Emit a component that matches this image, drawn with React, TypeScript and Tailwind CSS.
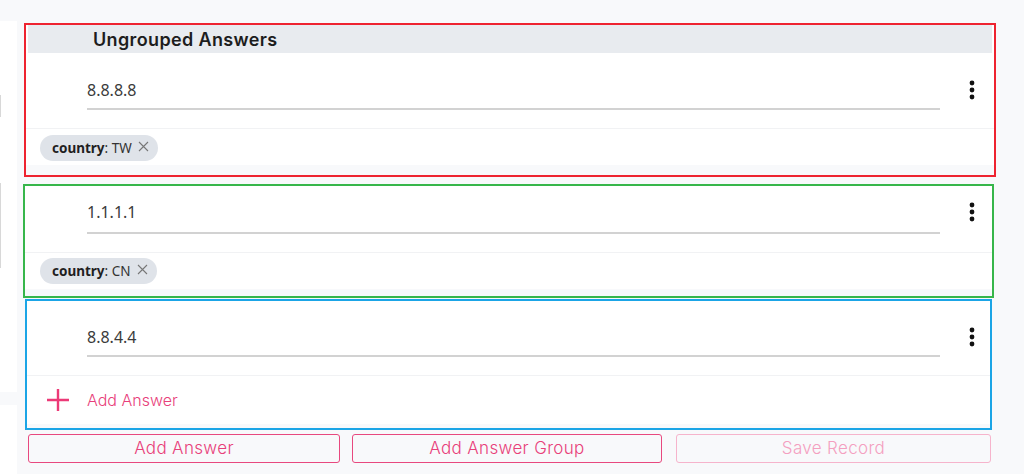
import React from "react";

const sans = { fontFamily: '"Noto Sans", "Open Sans", sans-serif' };
const geo = { fontFamily: 'Inter, "Noto Sans", sans-serif' };

function Kebab() {
  return (
    <svg width="6" height="20" viewBox="0 0 6 20" className="block">
      <circle cx="3" cy="3" r="2.4" fill="#111" />
      <circle cx="3" cy="10" r="2.4" fill="#111" />
      <circle cx="3" cy="17" r="2.4" fill="#111" />
    </svg>
  );
}

function Chip({ value }: { value: string }) {
  return (
    <div
      className="inline-flex h-[26px] items-center gap-[6px] rounded-full bg-[#dfe3e9] pl-[12px] pr-[9px] text-[13.5px] text-[#333]"
      style={sans}
    >
      <span>
        <span className="font-bold text-[#1f1f1f]">country</span>: {value}
      </span>
      <svg width="11" height="11" viewBox="0 0 11 11" className="mb-[3px]">
        <path d="M1 1L10 10M10 1L1 10" stroke="#777" strokeWidth="1.1" />
      </svg>
    </div>
  );
}

function AnswerRow({
  ip,
  padLeft,
  padTop,
  gapBelow,
}: {
  ip: string;
  padLeft: string;
  padTop: string;
  gapBelow: string;
}) {
  return (
    <div className={`flex items-start border-b border-[#f1f2f4] pb-[18px] ${padLeft} ${padTop}`}>
      <div className={`w-[853px] border-b-2 border-[#d2d2d2] ${gapBelow}`}>
        <div className="h-[24px] text-[16px] leading-[24px] text-[#3b3b3b]" style={sans}>
          {ip}
        </div>
      </div>
      <div className="ml-[29px] mt-[2px]">
        <Kebab />
      </div>
    </div>
  );
}

export default function App() {
  return (
    <div className="flex h-[474px] w-[1024px] overflow-hidden bg-[#f8f9fb]">
      {/* clipped sidebar */}
      <div className="flex w-[17px] shrink-0 flex-col pt-[21px]">
        <div className="relative h-[371px] bg-white">
          <div className="absolute left-0 top-[74px] h-[22px] w-px bg-[#d8d8d8]" />
          <div className="absolute left-0 top-[162px] h-[85px] w-px bg-[#d8d8d8]" />
        </div>
        <div className="mt-[13px] flex-1 bg-white" />
      </div>

      <div className="flex flex-col pt-[23px]">
        {/* Ungrouped answers */}
        <div className="ml-[7px] w-[972px] border-2 border-[#ee2330] pb-[10px]">
          <div className="bg-white">
            <div className="mx-[2px] flex h-[28px] items-center bg-[#e8ebef] pl-[65px]">
              <span className="text-[18px] font-semibold tracking-[0.02em] text-[#1d1d1d]" style={geo}>
                Ungrouped Answers
              </span>
            </div>
            <AnswerRow ip="8.8.8.8" padLeft="pl-[61px]" padTop="pt-[25px]" gapBelow="pb-[6px]" />
            <div className="h-[36px] pl-[14px] pt-[6px]">
              <Chip value="TW" />
            </div>
          </div>
        </div>

        {/* group 2 */}
        <div className="ml-[6px] mt-[7px] w-[971px] border-2 border-[#37b64b] pb-[7px]">
          <div className="bg-white">
            <AnswerRow ip="1.1.1.1" padLeft="pl-[62px]" padTop="pt-[14px]" gapBelow="pb-[8px]" />
            <div className="h-[36px] pl-[15px] pt-[5px]">
              <Chip value="CN" />
            </div>
          </div>
        </div>

        {/* group 3 */}
        <div className="ml-[8px] mt-[1px] w-[967px] border-2 border-[#1ba5e6] pb-[4px]">
          <div className="bg-white">
            <AnswerRow ip="8.8.4.4" padLeft="pl-[60px]" padTop="pt-[24px]" gapBelow="pb-[6px]" />
            <div className="flex h-[48px] items-center">
              <div className="ml-[20px] flex w-[40px] items-center">
                <svg width="22" height="22" viewBox="0 0 22 22">
                  <path d="M11 0V22M0 11H22" stroke="#ec3a77" strokeWidth="2.4" />
                </svg>
              </div>
              <span className="text-[16px] font-light text-[#e8407a]" style={geo}>
                Add Answer
              </span>
            </div>
          </div>
        </div>

        {/* actions */}
        <div className="ml-[11px] mt-[4px] flex items-center" style={geo}>
          <button className="h-[29px] w-[312px] rounded-[3px] border border-[#e8497f] text-[17px] font-light tracking-[0.02em] text-[#e8407a]">
            Add Answer
          </button>
          <button className="ml-[12px] h-[29px] w-[310px] rounded-[3px] border border-[#e8497f] text-[17px] font-light tracking-[0.02em] text-[#e8407a]">
            Add Answer Group
          </button>
          <button className="ml-[14px] h-[29px] w-[315px] rounded-[3px] border border-[#f6b4cc] text-[17px] font-light tracking-[0.02em] text-[#f49fc0]">
            Save Record
          </button>
        </div>
      </div>
    </div>
  );
}
